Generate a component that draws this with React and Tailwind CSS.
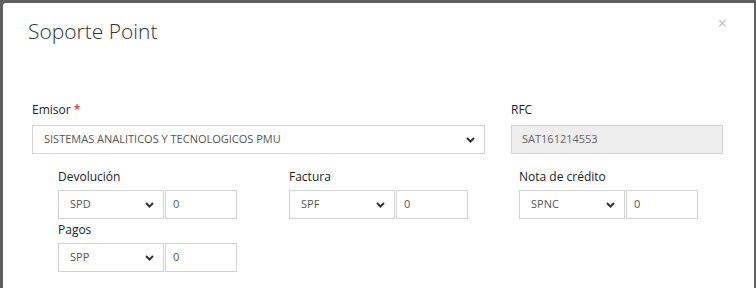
import React from "react";

const Chevron = () => (
  <svg width="9" height="6" viewBox="0 0 9 6" className="shrink-0">
    <path d="M1 1 L4.5 4.5 L8 1" fill="none" stroke="#333" strokeWidth="2" />
  </svg>
);

const SelectBox = ({ value, className }) => (
  <div
    className={`h-[29px] border border-[#d2d2d2] bg-white flex items-center justify-between pl-[11px] pr-[9px] text-[11px] text-[#555] ${className}`}
  >
    <span>{value}</span>
    <Chevron />
  </div>
);

const SerieField = ({ label, serie }) => (
  <div className="w-[180px]">
    <div className="text-[12px] font-medium text-[#222] leading-[17px] h-[17px]">
      {label}
    </div>
    <div className="flex mt-[5px] gap-px">
      <SelectBox value={serie} className="w-[106px]" />
      <div className="w-[72px] h-[29px] border border-[#d2d2d2] bg-white flex items-center pl-[7px] text-[11px] text-[#555]">
        0
      </div>
    </div>
  </div>
);

const App = () => {
  return (
    <div
      className="w-[756px] h-[288px] bg-[#5f5f5f] pt-[3px] pl-[3px] pr-[2px] overflow-hidden"
      style={{ fontFamily: '"Open Sans", "Liberation Sans", sans-serif' }}
    >
      <div className="bg-white rounded-tl-[3px] h-full">
        <div className="flex justify-between items-start pl-[25px] pr-[27px] pt-[12px] h-[98px]">
          <h1 className="text-[21px] font-light text-[#333] leading-[32px]">Soporte Point</h1>
          <span className="text-[16px] text-[#bdbdbd] leading-none">×</span>
        </div>
        <div className="flex pl-[29px]">
          <div className="w-[453px]">
            <div className="text-[12px] font-medium text-[#222] leading-[17px] h-[17px]">
              Emisor <span className="text-[#e00]">*</span>
            </div>
            <SelectBox
              value="SISTEMAS ANALITICOS Y TECNOLOGICOS PMU"
              className="mt-[7px] w-[453px]"
            />
          </div>
          <div className="ml-[26px] w-[212px]">
            <div className="text-[12px] font-medium text-[#222] leading-[17px] h-[17px]">RFC</div>
            <div className="mt-[7px] h-[29px] border border-[#d2d2d2] bg-[#eeeeee] flex items-center pl-[10px] text-[11px] text-[#666]">
              SAT161214553
            </div>
          </div>
        </div>
        <div className="pl-[55px] mt-[14px] grid grid-cols-[231px_230px_180px] gap-y-[2px]">
          <SerieField label="Devolución" serie="SPD" />
          <SerieField label="Factura" serie="SPF" />
          <SerieField label="Nota de crédito" serie="SPNC" />
          <SerieField label="Pagos" serie="SPP" />
        </div>
      </div>
    </div>
  );
};

export default App;
